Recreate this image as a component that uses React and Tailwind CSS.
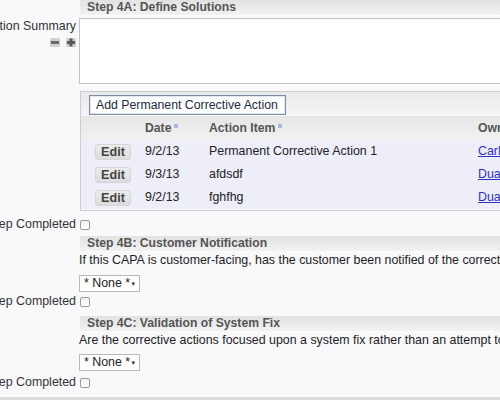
import React from "react";

const FONT = "font-['Liberation_Sans',Arial,Helvetica,sans-serif]";

function Row({ label, className = "", children }) {
  return (
    <div className={`flex shrink-0 ${className}`}>
      <div className="w-[76px] shrink-0 flex flex-col items-end">{label}</div>
      <div className="ml-[3px] w-[560px] shrink-0">{children}</div>
    </div>
  );
}

function Label({ children, className = "" }) {
  return (
    <div className={`w-[76px] flex justify-end whitespace-nowrap h-[15px] leading-[15px] text-[#333] ${className}`}>
      <span className="shrink-0">{children}</span>
    </div>
  );
}

function Header({ children }) {
  return (
    <div className="ml-[1px] h-[15px] leading-[15px] pl-[7px] font-bold text-[12.2px] text-[#555] bg-linear-to-b from-[#e2e2e2] to-[#f2f2f2] border-b border-[#fbfbfb] box-content whitespace-nowrap">
      {children}
    </div>
  );
}

function Check() {
  return (
    <div className="ml-[1px] w-[10px] h-[10px] rounded-[2px] border border-[#9a9a9a] bg-linear-to-b from-[#f0f0f0] to-[#ffffff]" />
  );
}

function Completed({ className = "" }) {
  return (
    <Row className={className} label={<Label>Step Completed</Label>}>
      <div className="h-[15px] flex items-center">
        <Check />
      </div>
    </Row>
  );
}

function Select() {
  return (
    <div className="w-[61px] h-[17px] border border-[#b9b9b9] bg-white flex items-center justify-between pl-[4px] pr-[4px] text-[#222] leading-[15px] whitespace-nowrap">
      <span>* None *</span>
      <span className="text-[6px] text-[#333] leading-none">▼</span>
    </div>
  );
}

function Sort() {
  return <span className="inline-block w-[4px] h-[4px] bg-[#a8b7d8] ml-[3px] mb-[3px]" />;
}

function EditBtn() {
  return (
    <div className="ml-[14px] w-[36px] h-[16px] rounded-[3px] border border-[#d6d6d6] bg-linear-to-b from-[#ececec] to-[#dcdcdc] flex items-center justify-center font-bold text-[12.6px] text-[#444] leading-[14px]">
      Edit
    </div>
  );
}

function MinusPlus() {
  return (
    <div className="flex gap-[6px] mt-[4px]">
      <svg width="10" height="9" viewBox="0 0 10 9">
        <rect x="0" y="0" width="10" height="9" rx="1.5" fill="#d0d0d0" />
        <rect x="1" y="3" width="8" height="3" fill="#6a6a6a" />
      </svg>
      <svg width="10" height="9" viewBox="0 0 10 9">
        <rect x="0" y="0" width="10" height="9" rx="1.5" fill="#d0d0d0" />
        <rect x="1" y="3" width="8" height="3" fill="#5a5a5a" />
        <rect x="3.5" y="0.5" width="3" height="8" fill="#5a5a5a" />
      </svg>
    </div>
  );
}

const rows = [
  { date: "9/2/13", item: "Permanent Corrective Action 1", owner: "Carlos" },
  { date: "9/3/13", item: "afdsdf", owner: "Duane" },
  { date: "9/2/13", item: "fghfhg", owner: "Duane" },
];

export default function App() {
  return (
    <div className={`${FONT} w-[500px] h-[400px] overflow-hidden bg-[#f9f9fc] text-[12.4px] flex flex-col`}>
      <Row>
        <Header>Step 4A: Define Solutions</Header>
      </Row>
      <Row
        className="mt-[2px]"
        label={
          <>
            <Label className="mt-[1px]">Solution Summary</Label>
            <MinusPlus />
          </>
        }
      >
        <div className="h-[66px] border border-[#c4c4c4] bg-white" />
      </Row>
      <Row className="mt-[7px]">
        <div className="ml-[1px] h-[120px] border-t border-l border-b border-[#cdcdcd] flex flex-col">
          <div className="h-[24px] bg-linear-to-b from-[#e9e9e9] to-[#f5f5f5] pl-[8px] pt-[3px] border-b border-[#fafafa]">
            <div className="w-[197px] h-[20px] border border-[#7b8ca3] bg-white shadow-[inset_0_0_0_1px_#dfe8f3] flex items-center pl-[6px] text-[12.3px] text-[#1e2b3a] whitespace-nowrap">
              Add Permanent Corrective Action
            </div>
          </div>
          <div className="h-[24px] bg-linear-to-b from-[#e6e6e6] to-[#f1f1f1] flex items-center font-bold text-[12.2px] text-[#555] whitespace-nowrap">
            <div className="w-[60px]" />
            <div className="w-[63px] pl-[4px] flex items-center">Date<Sort /></div>
            <div className="w-[269px] pl-[5px] flex items-center">Action Item<Sort /></div>
            <div className="pl-[5px]">Owner</div>
          </div>
          {rows.map((r, i) => (
            <div key={i} className="h-[23px] bg-[#eeeef8] flex items-center text-[#222] whitespace-nowrap">
              <div className="w-[60px]"><EditBtn /></div>
              <div className="w-[63px] pl-[4px]">{r.date}</div>
              <div className="w-[269px] pl-[5px]">{r.item}</div>
              <div className="pl-[5px] text-[#3030c8] underline">{r.owner}</div>
            </div>
          ))}
        </div>
      </Row>
      <Completed className="mt-[6px]" />
      <Row className="mt-[4px]">
        <Header>Step 4B: Customer Notification</Header>
      </Row>
      <Row className="mt-[1px]">
        <div className="h-[15px] leading-[15px] text-[#222] whitespace-nowrap">
          If this CAPA is customer-facing, has the customer been notified of the corrective actions?
        </div>
      </Row>
      <Row className="mt-[7px]">
        <Select />
      </Row>
      <Completed className="mt-[2px]" />
      <Row className="mt-[7px]">
        <Header>Step 4C: Validation of System Fix</Header>
      </Row>
      <Row className="mt-[1px]">
        <div className="h-[15px] leading-[15px] text-[#222] whitespace-nowrap">
          Are the corrective actions focused upon a system fix rather than an attempt to fix the symptom?
        </div>
      </Row>
      <Row className="mt-[6px]">
        <Select />
      </Row>
      <Completed className="mt-[4px]" />
      <div className="mt-[7px] h-[12px] shrink-0 bg-[#dcdcdc]" />
    </div>
  );
}
